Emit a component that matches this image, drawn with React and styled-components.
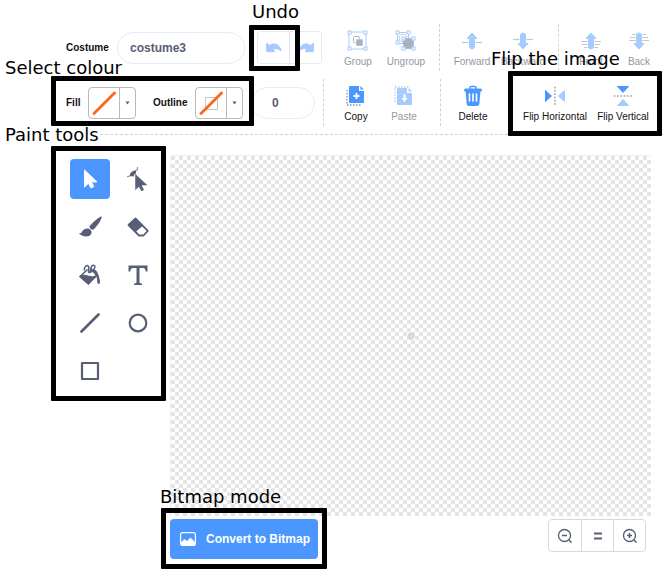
import React from "react";
import styled, { createGlobalStyle, css } from "styled-components";

const GlobalStyle = createGlobalStyle`
  *, *::before, *::after { box-sizing: border-box; }
  body { margin: 0; background: #fff; }
  button, input { font-family: inherit; margin: 0; }
`;

const INK = "#575e75";
const BLUE = "#4c97ff";
const PALE = "#a6cbff";
const GREY = "#abb0bd";

const Editor = styled.main`
  position: relative;
  min-height: 100vh;
  overflow: hidden;
  padding: 24px 15px 0 0;
  font-family: "Liberation Sans", Arial, sans-serif;
  color: #111;
`;

const Toolbar = styled.div`
  display: flex;
  flex-direction: column;
  gap: 8px;
  margin-right: -15px;
`;

const ToolRow = styled.div`
  display: flex;
  align-items: center;
  height: 47px;
  padding-left: 66px;
`;

const FieldLabel = styled.label`
  flex: none;
  width: ${(p) => p.$width}px;
  font-size: 10px;
  font-weight: 700;
`;

const PillInput = styled.input`
  flex: none;
  width: ${(p) => p.$width}px;
  height: 32px;
  padding: 0 12px;
  padding-left: ${(p) => p.$indent}px;
  border: 1px solid #e6eef5;
  border-radius: 16px;
  outline: none;
  background: #fff;
  color: ${INK};
  font-size: 12px;
  font-weight: 700;
`;

const HistoryGroup = styled.div`
  display: flex;
  flex: none;
  margin-left: 12px;
  border: 1px solid #e8e9ec;
  border-radius: 4px;
  overflow: hidden;
`;

const HistoryButton = styled.button`
  display: grid;
  place-items: center;
  width: ${(p) => (p.$last ? 31 : 32)}px;
  height: 31px;
  padding: 0;
  border: 0;
  border-right: ${(p) => (p.$last ? "0" : "1px solid #e8e9ec")};
  background: #fff;
`;

const ActionGroup = styled.div`
  display: flex;
  flex: none;
  margin-left: ${(p) => p.$before}px;
  gap: ${(p) => p.$gap || 0}px;
`;

const ActionButton = styled.button`
  display: flex;
  flex-direction: column;
  align-items: center;
  gap: 4px;
  width: ${(p) => (p.$wide ? 68 : 48)}px;
  padding: 3px 0 0;
  border: 0;
  background: none;
  color: ${(p) => (p.disabled ? "#96989e" : "#111")};
  font-size: 10px;
  line-height: 12px;
  white-space: nowrap;
`;

const Divider = styled.div`
  flex: none;
  align-self: stretch;
  margin-left: ${(p) => p.$before}px;
  border-left: 1px dashed #d2d2d2;
`;

const Rule = styled.hr`
  width: auto;
  margin: 8px -12px 20px 100px;
  border: 0;
  border-top: 1px dashed #d2d2d2;
`;

const Swatch = styled.button`
  display: flex;
  flex: none;
  width: 48px;
  height: 32px;
  margin-right: ${(p) => p.$after}px;
  padding: 0;
  border: 1px solid #b9b9b9;
  border-radius: 4px;
  background: #fff;
`;

const SwatchColour = styled.span`
  display: grid;
  place-items: center;
  width: 31px;
  height: 30px;
  border-right: 1px solid #b9b9b9;
`;

const SwatchArrow = styled.span`
  display: grid;
  flex: 1;
  place-items: center;
  height: 30px;
`;

const Workspace = styled.div`
  display: flex;
  align-items: flex-start;
  padding-left: 70px;
`;

const Tools = styled.div`
  display: grid;
  grid-template-columns: 40px 40px;
  gap: 8px;
  margin: 4px 12px 0 0;
`;

const ToolButton = styled.button`
  display: grid;
  place-items: center;
  width: 40px;
  height: 40px;
  padding: 0;
  border: 0;
  border-radius: 4px;
  background: none;
  color: ${INK};
  ${(p) => p.$active && css`background: ${BLUE}; color: #fff;`}
`;

const CanvasColumn = styled.div`
  flex: 1;
  min-width: 0;
`;

const Canvas = styled.div`
  display: grid;
  place-items: center;
  height: 361px;
  border: 1px solid #eee;
  border-width: 1px 0 0 1px;
  border-top-left-radius: 4px;
  background: repeating-conic-gradient(#fff 0 25%, #e5e5e5 0 50%) 0 0 / 8px 8px;
`;

const Footer = styled.div`
  display: flex;
  justify-content: space-between;
  align-items: flex-start;
  padding: 3px 5px 0 0;
`;

const ConvertButton = styled.button`
  display: flex;
  align-items: center;
  gap: 10px;
  height: 40px;
  padding: 0 8px 0 10px;
  border: 0;
  border-radius: 4px;
  background: ${BLUE};
  color: #fff;
  font-size: 12px;
  font-weight: 700;
  white-space: nowrap;
`;

const ZoomGroup = styled.div`
  display: flex;
  border: 1px solid #d9d9d9;
  border-radius: 4px;
`;

const ZoomButton = styled.button`
  display: grid;
  place-items: center;
  width: 32px;
  height: 31px;
  padding: 0;
  border: 0;
  background: none;
  color: ${INK};
  & + & { border-left: 1px solid #d9d9d9; }
`;

const Callout = styled.div`
  position: absolute;
  left: ${(p) => p.$x}px;
  top: ${(p) => p.$y}px;
  width: ${(p) => p.$w}px;
  height: ${(p) => p.$h}px;
  border: 5px solid #000;
  border-radius: 1px;
  pointer-events: none;
`;

const CalloutLabel = styled.div`
  position: absolute;
  left: ${(p) => p.$x}px;
  top: ${(p) => p.$y}px;
  color: #000;
  font-family: "DejaVu Sans", sans-serif;
  font-size: 18px;
  line-height: 20px;
  white-space: nowrap;
`;

const Svg = ({ w = 24, h = 24, children }) => (
  <svg width={w} height={h} viewBox={`0 0 ${w} ${h}`} fill="none" aria-hidden="true">
    {children}
  </svg>
);

const Handles = ({ points }) =>
  points.map(([x, y]) => (
    <rect key={`${x}-${y}`} x={x - 1.5} y={y - 1.5} width="3" height="3" fill="#fff" stroke={PALE} />
  ));

const HistoryIcon = ({ redo }) => (
  <Svg w={18} h={14}>
    <path
      transform={redo ? "matrix(-1 0 0 1 18 0)" : undefined}
      d="M1.500 3q0-1 1-.3L4.500 4.500C8 1.500 14 2.500 16 9q.2 1-1 .3C12.500 7.300 10.500 7 8 8.200l1.500 1.500q.6 1-.4 1H2.500q-1 0-1-1z"
      fill={PALE}
      stroke={PALE}
      strokeLinejoin="round"
    />
  </Svg>
);

const GroupIcon = () => (
  <Svg w={22} h={22}>
    <rect x="2" y="2" width="17" height="17" stroke={PALE} />
    <rect x="6.500" y="6.500" width="6" height="6" rx="1" stroke={GREY} />
    <rect x="9" y="9" width="7" height="7" rx="1" fill={GREY} stroke="#fff" strokeWidth=".5" />
    <Handles points={[[2.5, 2.5], [18.5, 2.5], [2.5, 18.5], [18.5, 18.5]]} />
  </Svg>
);

const UngroupIcon = () => (
  <Svg w={22} h={22}>
    <path d="M2.500 2.500h11v11h-11z" stroke={PALE} />
    <circle cx="8" cy="8" r="3.800" stroke={GREY} strokeDasharray="2 1" />
    <path d="M8.500 8.500h10v10h-10z" stroke={PALE} />
    <circle cx="13.500" cy="13.500" r="5.200" fill={GREY} />
    <Handles points={[[2.5, 2.5], [13.5, 2.5], [2.5, 12.5], [8.5, 8.5], [18.5, 8.5], [8.5, 18.5], [18.5, 18.5]]} />
  </Svg>
);

const ArrowIcon = ({ down, lines }) => (
  <Svg w={22} h={22}>
    <g transform={down ? "matrix(1 0 0 -1 0 22)" : undefined}>
      <path d={lines ? "M1 11.500h20M2 14.500h18M4 17.500h14" : "M1 12.500h20"} stroke="#c3c6cf" strokeWidth="1.200" />
      <path d="M7.500 9v11h7V9z" fill="#fff" />
      <path d="M11 3l5 5.500h-2.500v8.500c0 2.500-5 2.500-5 0V8.500H6z" fill={PALE} stroke={PALE} strokeLinejoin="round" />
    </g>
  </Svg>
);

const CopyIcon = ({ paste }) => (
  <Svg w={22} h={22}>
    <path
      d={paste ? "M2 17V2h15" : "M2 5v15h14"}
      stroke={paste ? "#c4c6cc" : "#8b90a0"}
      strokeWidth="1.300"
      strokeDasharray="1.500 1.500"
    />
    <path
      d={paste ? "M5 3h9v5h5v11q0 1-1 1H5q-1 0-1-1V4q0-1 1-1z" : "M5 1h9v5h5v11q0 1-1 1H5q-1 0-1-1V2q0-1 1-1z"}
      fill={paste ? PALE : BLUE}
    />
    {paste ? (
      <>
        <path d="M15.500 3v3.500H19z" fill={PALE} />
        <path d="M10.500 9v4H8.500l3 4 3-4h-2V9z" fill="#fff" />
      </>
    ) : (
      <>
        <path d="M15.500 1v3.500H19z" fill={BLUE} />
        <path d="M11.500 8v6M8.500 11h6" stroke="#fff" strokeWidth="1.800" />
      </>
    )}
  </Svg>
);

const TrashIcon = () => (
  <Svg w={22} h={22}>
    <path d="M8 4V2.500Q8 1.500 9 1.500h4q1 0 1 1V4" stroke={BLUE} strokeWidth="1.500" />
    <rect x="2" y="3.500" width="18" height="3" rx="1.500" fill={BLUE} />
    <path d="M3.500 6h15l-1.200 13q-.2 2-2 2H6.700q-1.800 0-2-2z" fill={BLUE} />
    <path d="M7.500 9v7M11 9v7M14.500 9v7" stroke="#fff" strokeWidth="1.600" strokeLinecap="round" />
  </Svg>
);

const FlipIcon = ({ vertical }) => (
  <Svg w={22} h={22}>
    <g transform={vertical ? "matrix(0 1 1 0 0 0)" : undefined}>
      <path d="M1.500 5.500v11l6-5.500z" fill={BLUE} stroke={BLUE} strokeLinejoin="round" />
      <path d="M20.500 5.500v11l-6-5.500z" fill={PALE} stroke={PALE} strokeLinejoin="round" />
      <path d="M11 2.500v18" stroke={GREY} strokeWidth="2" strokeLinecap="round" strokeDasharray="0 3.300" />
    </g>
  </Svg>
);

const toolIcons = {
  Select: (
    <path d="M6.500 3v17l4-3.800 2.500 4.800 2.800-1.400-2.400-4.700H19z" fill="currentColor" stroke="currentColor" strokeLinejoin="round" />
  ),
  Reshape: (
    <>
      <path d="M1 9.500c3 .5 4-.5 5-2.500S9 4.500 10.500 3.500 11.500 1 11.500 0" stroke="#8d92a3" strokeWidth="1.200" />
      <path d="M3.500 9Q4.500 3.500 10 3.500v3.500Q8 7 7.500 9.500z" fill="currentColor" />
      <path d="M9 6.500v17l3.800-3.500 2.600 4.500 2.900-1.500-2.300-4.500h6z" fill="currentColor" stroke="#fff" strokeWidth=".5" />
    </>
  ),
  Brush: (
    <>
      <path d="M23.500 1.500c1 1-3 8.500-8 13-1.500 1.200-5-2-3.800-3.500C15.500 6.500 22.500.5 23.500 1.500z" fill="currentColor" />
      <path d="M10.500 13.500q3 1 3.200 3.700c-.5 5-7.500 6-13 1.300 2.600.2 2.800-1 4.100-3q2-2.500 5.700-2z" fill="currentColor" />
    </>
  ),
  Eraser: (
    <>
      <path d="M9.500 3.500l12.300 12.300-4.300 4.700h-4.500L2.500 10z" stroke="currentColor" strokeWidth="1.800" strokeLinejoin="round" />
      <path d="M9.500 3.500l7 7-7.500 6.500L2.500 10z" fill="currentColor" stroke="currentColor" strokeLinejoin="round" />
    </>
  ),
  Fill: (
    <>
      <path d="M9.500 6.500L2 13.500l8 7 9-8-6.500-7" stroke="currentColor" strokeWidth="1.500" strokeLinejoin="round" />
      <path d="M1.500 13.500q4-2.500 8.500-.5t8.500-.5l-8 9z" fill="currentColor" stroke="currentColor" strokeLinejoin="round" />
      <path d="M6.500 7.500C5.500 4 9 1 10.500 3.500S9 8.500 11 9.500 12 3.500 14.500 2.500s3.500 1.500 1 4l-3 3" stroke="currentColor" strokeWidth="1.500" />
      <path d="M14.500 6c4 0 6 4 7.500 12 .6 3.500-2.500 4-2.700 1-.3-3.500-.3-8.500-4.800-10z" fill="currentColor" />
    </>
  ),
  Text: (
    <path d="M2.500 2.500h19v6h-1.800q-.2-3.500-2.700-3.500h-3.500v14.500q0 1 2.500 1v1.500H8v-1.500q2.500 0 2.500-1V5H7Q4.500 5 4.300 8.500H2.500z" fill="currentColor" />
  ),
  Line: <path d="M3.500 20.500l17-17" stroke="currentColor" strokeWidth="2.700" strokeLinecap="round" />,
  Circle: <circle cx="12" cy="12" r="8.300" stroke="currentColor" strokeWidth="2.200" />,
  Rectangle: <rect x="4" y="4" width="16" height="16" stroke="currentColor" strokeWidth="2.200" strokeLinejoin="round" />,
};

const ColourPicker = ({ id, outline, after }) => (
  <Swatch id={id} $after={after} type="button">
    <SwatchColour>
      <Svg w={24} h={24}>
        {outline && <rect x="6.500" y="6.500" width="12" height="12" stroke="#c6c6c6" />}
        <path d="M2 22.500L22.500 2" stroke="#ff661a" strokeWidth="2.800" strokeLinecap="round" />
      </Svg>
    </SwatchColour>
    <SwatchArrow>
      <Svg w={5} h={4}>
        <path d="M.5.500h4l-2 3z" fill={INK} />
      </Svg>
    </SwatchArrow>
  </Swatch>
);

const Action = ({ icon, label, off, wide }) => (
  <ActionButton type="button" disabled={off} $wide={wide}>
    {icon}
    {label}
  </ActionButton>
);

const Magnifier = ({ plus }) => (
  <Svg w={16} h={16}>
    <circle cx="7.500" cy="7.500" r="6" stroke="currentColor" strokeWidth="1.300" />
    <path d={plus ? "M12 12l2.500 2.500M5 7.500h5M7.500 5v5" : "M12 12l2.500 2.500M5 7.500h5"} stroke="currentColor" strokeWidth="1.500" />
  </Svg>
);

const callouts = [
  { text: "Undo", x: 252, y: 2, box: [249, 25, 51, 46] },
  { text: "Select colour", x: 5, y: 58, box: [51, 76, 203, 50] },
  { text: "Flip the image", x: 491, y: 49, box: [508, 71, 154, 65] },
  { text: "Paint tools", x: 5, y: 125, box: [51, 146, 115, 255] },
  { text: "Bitmap mode", x: 160, y: 487, box: [161, 508, 166, 61] },
];

export default function App() {
  return (
    <Editor>
      <GlobalStyle />
      <Toolbar>
        <ToolRow>
          <FieldLabel htmlFor="costume" $width={51}>Costume</FieldLabel>
          <PillInput id="costume" $width={128} $indent={12} defaultValue="costume3" />
          <HistoryGroup>
            <HistoryButton type="button" aria-label="Undo"><HistoryIcon /></HistoryButton>
            <HistoryButton type="button" aria-label="Redo" $last><HistoryIcon redo /></HistoryButton>
          </HistoryGroup>
          <ActionGroup $before={12}>
            <Action off icon={<GroupIcon />} label="Group" />
            <Action off icon={<UngroupIcon />} label="Ungroup" />
          </ActionGroup>
          <Divider $before={9} />
          <ActionGroup $before={8} $gap={3}>
            <Action off icon={<ArrowIcon />} label="Forward" />
            <Action off icon={<ArrowIcon down />} label="Backward" />
          </ActionGroup>
          <Divider $before={11} />
          <ActionGroup $before={8}>
            <Action off icon={<ArrowIcon lines />} label="Front" />
            <Action off icon={<ArrowIcon down lines />} label="Back" />
          </ActionGroup>
        </ToolRow>
        <ToolRow>
          <FieldLabel htmlFor="fill" $width={22}>Fill</FieldLabel>
          <ColourPicker id="fill" after={17} />
          <FieldLabel htmlFor="outline" $width={42}>Outline</FieldLabel>
          <ColourPicker id="outline" outline after={8} />
          <PillInput $width={64} $indent={20} defaultValue="0" aria-label="Outline width" />
          <Divider $before={8} />
          <ActionGroup $before={8}>
            <Action icon={<CopyIcon />} label="Copy" />
            <Action off icon={<CopyIcon paste />} label="Paste" />
          </ActionGroup>
          <Divider $before={12} />
          <ActionGroup $before={8}>
            <Action icon={<TrashIcon />} label="Delete" />
          </ActionGroup>
          <ActionGroup $before={24}>
            <Action wide icon={<FlipIcon />} label="Flip Horizontal" />
            <Action wide icon={<FlipIcon vertical />} label="Flip Vertical" />
          </ActionGroup>
        </ToolRow>
      </Toolbar>
      <Rule />
      <Workspace>
        <Tools>
          {Object.entries(toolIcons).map(([name, icon]) => (
            <ToolButton key={name} type="button" aria-label={name} $active={name === "Select"}>
              <Svg>{icon}</Svg>
            </ToolButton>
          ))}
        </Tools>
        <CanvasColumn>
          <Canvas>
            <Svg w={8} h={8}>
              <circle cx="4" cy="4" r="3.500" fill="#d6d6d6" />
              <circle cx="4" cy="4" r="1.500" fill="#dedede" />
            </Svg>
          </Canvas>
          <Footer>
            <ConvertButton type="button">
              <Svg w={16} h={14}>
                <rect x=".6" y=".6" width="14.800" height="12.800" rx="2" stroke="#fff" strokeWidth="1.200" />
                <path d="M1 10.500L4.500 7l2.500 2 3.500-3.500L15 10v3H1z" fill="#fff" />
              </Svg>
              Convert to Bitmap
            </ConvertButton>
            <ZoomGroup>
              <ZoomButton type="button" aria-label="Zoom out"><Magnifier /></ZoomButton>
              <ZoomButton type="button" aria-label="Reset zoom">
                <Svg w={10} h={10}>
                  <path d="M1 2.500h8M1 7.500h8" stroke="currentColor" strokeWidth="2" />
                </Svg>
              </ZoomButton>
              <ZoomButton type="button" aria-label="Zoom in"><Magnifier plus /></ZoomButton>
            </ZoomGroup>
          </Footer>
        </CanvasColumn>
      </Workspace>
      {callouts.map(({ text, x, y, box: [bx, by, bw, bh] }) => (
        <React.Fragment key={text}>
          <Callout $x={bx} $y={by} $w={bw} $h={bh} />
          <CalloutLabel $x={x} $y={y}>{text}</CalloutLabel>
        </React.Fragment>
      ))}
    </Editor>
  );
}
